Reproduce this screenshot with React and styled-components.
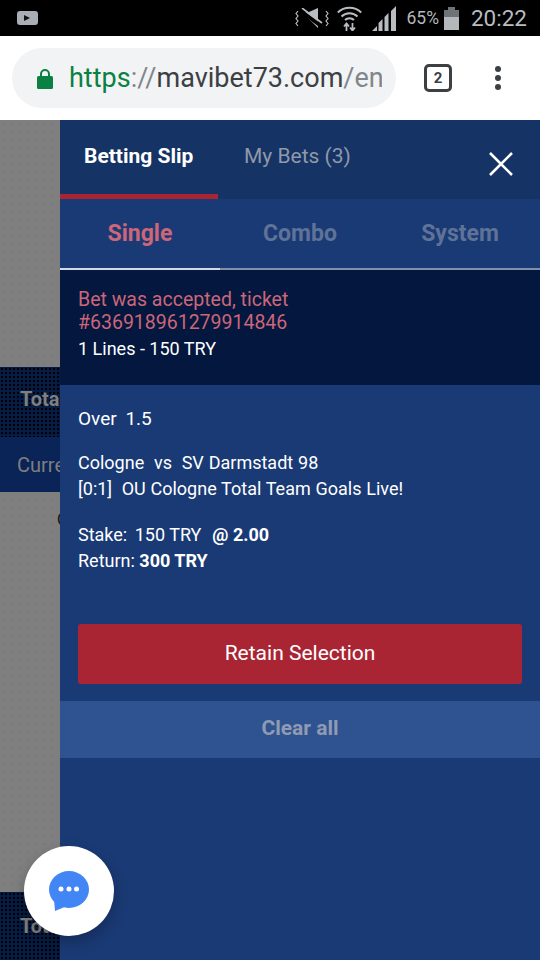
import React from 'react';
import styled, { createGlobalStyle } from 'styled-components';

const Global = createGlobalStyle`
  html, body { margin: 0; padding: 0; background: #000; }
  * { box-sizing: border-box; }
  body { font-family: Roboto, "Liberation Sans", sans-serif; -webkit-font-smoothing: antialiased; }
`;

const Screen = styled.div`
  width: 540px; height: 960px; display: flex; flex-direction: column; overflow: hidden; position: relative;
`;
const StatusBar = styled.div`
  height: 36px; background: #000; display: flex; align-items: center; padding: 0 13px 0 16px; color: #b9bcc0; flex: none;
`;
const StatusRight = styled.div`
  margin-left: auto; display: flex; align-items: center;
`;
const Battery = styled.span`
  font-size: 17.5px; margin: 0 5px 0 10px; color: #b4b7bb;
`;
const Clock = styled.span`
  font-size: 22.5px; margin-left: 12px; color: #b9bcc0;
`;
const BrowserBar = styled.div`
  height: 84px; background: #fff; display: flex; align-items: center; padding: 0 0 0 12px; flex: none;
`;
const UrlPill = styled.div`
  width: 384px; height: 60px; border-radius: 30px; background: #f1f3f4; display: flex; align-items: center; padding-left: 25px; overflow: hidden;
`;
const Url = styled.div`
  font-size: 27px; margin-left: 16px; white-space: nowrap; width: 313px; overflow: hidden; color: #3c4043;
`;
const Scheme = styled.span`color: #0b8043;`;
const Dim = styled.span`color: #80868b;`;
const TabCount = styled.div`
  width: 28px; height: 28px; margin-left: 28px; border: 3px solid #3c4043; border-radius: 5px; font-size: 15px; font-weight: 700; color: #3c4043; display: flex; align-items: center; justify-content: center; flex: none;
`;
const Dots = styled.div`
  margin-left: 43px; display: flex; flex-direction: column; gap: 3px;
`;
const Dot = styled.span`width: 6px; height: 6px; border-radius: 50%; background: #3c4043;`;

const Page = styled.div`
  flex: 1; position: relative; background-color: #7f7f7f; background-image: radial-gradient(#747474 .6px, transparent .8px); background-size: 8px 8px; display: flex; flex-direction: column; overflow: hidden;
`;
const Gray = styled.div`
  height: ${p => p.$h}px; flex: none; position: relative;
`;
const Band = styled.div`
  height: ${p => p.$h}px; flex: none; background-color: ${p => p.$bg}; background-image: radial-gradient(${p => p.$dot} .7px, transparent .9px); background-size: ${p => p.$dots}px ${p => p.$dots}px; color: #7f7f7f; font-size: 20px; font-weight: ${p => p.$w || 400}; padding: 0 0 ${p => p.$pb || 0}px ${p => p.$pl}px; display: flex; align-items: center; white-space: nowrap;
`;
const StrayLetter = styled.div`
  color: #111; font-size: 16px; padding: 21px 0 0 57px; line-height: 14px;
`;

const Drawer = styled.div`
  position: absolute; left: 60px; top: 0; right: 0; bottom: 0; background: #1a3a75; display: flex; flex-direction: column; color: #fff;
`;
const Header = styled.div`
  height: 79px; background: #163365; display: flex; flex: none; align-items: stretch; position: relative;
`;
const MainTab = styled.div`
  width: ${p => p.$w}px; font-size: 21px; line-height: 21px; font-weight: ${p => p.$active ? 700 : 400}; color: ${p => p.$active ? '#fff' : '#8f99a9'}; border-bottom: 5px solid ${p => p.$active ? '#a92533' : 'transparent'}; padding: 26px 0 0 ${p => p.$pl}px; white-space: nowrap;
`;
const Close = styled.div`
  position: absolute; left: 427px; top: 30px; width: 28px; height: 28px;
`;
const SubTabs = styled.div`
  height: 71px; display: flex; flex: none;
`;
const SubTab = styled.div`
  flex: 1; display: flex; align-items: center; justify-content: center; font-size: 23px; font-weight: 700; color: ${p => p.$active ? '#cc6678' : '#5f7297'}; border-bottom: 2px solid ${p => p.$active ? '#d3dae6' : '#8190ab'};
`;
const Notice = styled.div`
  height: 115px; background: #03173f; padding: 18px 18px 0; font-size: 18px; line-height: 23px; flex: none;
`;
const NoticeAccent = styled.div`color: #cc6678; font-size: 19.5px;`;
const NoticeLine = styled.div`margin-top: 3px; line-height: 23px;`;
const Slip = styled.div`
  padding: 22px 18px 0; font-size: 18px; flex: none; height: 239px;
`;
const SlipTitle = styled.div`line-height: 24px; font-size: 19px; word-spacing: 4px;`;
const SlipLine = styled.div`
  line-height: 26px; word-spacing: ${p => p.$ws || 0}px; white-space: pre;
`;
const StakeLabel = styled.span`margin-right: 3px;`;
const Odds = styled.b`margin-left: 2px;`;
const Group = styled.div`margin-top: ${p => p.$mt}px;`;
const Retain = styled.div`
  margin: 0 18px; height: 60px; padding-bottom: 2px; background: #a92533; border-radius: 3px; display: flex; align-items: center; justify-content: center; font-size: 21px; flex: none;
`;
const Clear = styled.div`
  margin-top: 17px; height: 57px; padding-bottom: 3px; background: #2f5291; color: #8f9bb3; font-weight: 700; font-size: 21px; display: flex; align-items: center; justify-content: center; flex: none;
`;
const Fab = styled.div`
  position: absolute; left: 24px; top: 726px; width: 90px; height: 90px; border-radius: 50%; background: #fff; box-shadow: 0 6px 14px rgba(0,0,0,.25); display: flex; align-items: center; justify-content: center;
`;

export default function App() {
  return (
    <Screen>
      <Global />
      <StatusBar>
        <svg width="22" height="15" viewBox="0 0 22 15">
          <rect width="21" height="14" x="1" y="0" rx="3" fill="#a9adb5" />
          <path d="M8 4l6 3-6 3z" fill="#111" />
        </svg>
        <StatusRight>
          <svg width="34" height="20" viewBox="0 0 34 20">
            <path d="M3 3l-2 2.500 2 2.500-2 2.500 2 2.500-2 2.500 2 2.500M31 3l2 2.500-2 2.500 2 2.500-2 2.500 2 2.500-2 2.500" stroke="#b9bcc0" strokeWidth="1.200" fill="none" />
            <path d="M7 4h7l9-4v20z" fill="#b9bcc0" />
            <path d="M6 3l20 15" stroke="#000" strokeWidth="3.500" />
            <path d="M7 0l20 15" stroke="#b9bcc0" strokeWidth="1.600" />
          </svg>
          <svg width="25" height="26" viewBox="0 0 25 26" style={{ marginLeft: 8 }}>
            <path d="M.8 7.500a17 17 0 0 1 23.400 0M4.500 11.500a11.500 11.500 0 0 1 16 0M8 15a6.500 6.500 0 0 1 9 0" stroke="#b9bcc0" strokeWidth="2" fill="none" />
            <path d="M9.500 26v-6M7 21.500l2.500-3 2.500 3M15.500 18v6M13 22.500l2.500 3 2.500-3" stroke="#b9bcc0" strokeWidth="1.800" fill="none" />
          </svg>
          <svg width="24" height="25" viewBox="0 0 24 25" style={{ marginLeft: 10 }}>
            <path d="M0 25L5 20V25ZM6.500 25V17L10.500 13V25ZM12.500 25V11L16.500 7V25ZM19 25V5L24 0V25Z" fill="#b9bcc0" />
          </svg>
          <Battery>65%</Battery>
          <svg width="15" height="23" viewBox="0 0 15 23">
            <rect x="4" y="0" width="7" height="3" fill="#6f7276" />
            <rect x="0" y="3" width="15" height="20" fill="#b4b7bb" />
            <rect x="0" y="3" width="15" height="7" fill="#6f7276" />
          </svg>
          <Clock>20:22</Clock>
        </StatusRight>
      </StatusBar>
      <BrowserBar>
        <UrlPill>
          <svg width="16" height="21" viewBox="0 0 16 21" style={{ flex: 'none' }}>
            <path d="M4 9V6a4 4 0 0 1 8 0v3" stroke="#0b8043" strokeWidth="2" fill="none" />
            <rect x="0" y="8" width="16" height="13" rx="1.500" fill="#0b8043" />
          </svg>
          <Url><Scheme>https</Scheme><Dim>://</Dim>mavibet73.com<Dim>/en/</Dim></Url>
        </UrlPill>
        <TabCount>2</TabCount>
        <Dots><Dot /><Dot /><Dot /></Dots>
      </BrowserBar>
      <Page>
        <Gray $h={247} />
        <Band $h={70} $bg="#071c45" $dot="#000" $dots={4} $w={700} $pl={20} $pb={6}>Total</Band>
        <Band $h={55} $bg="#0f2a60" $dot="#0a2458" $dots={2} $pl={17}>Current</Band>
        <Gray $h={400}><StrayLetter>C</StrayLetter></Gray>
        <Band $h={68} $bg="#071c45" $dot="#000" $dots={4} $w={700} $pl={20}>Total</Band>
        <Drawer>
          <Header>
            <MainTab $active $w={158} $pl={24}>Betting Slip</MainTab>
            <MainTab $w={160} $pl={26}>My Bets (3)</MainTab>
            <Close>
              <svg width="28" height="28" viewBox="0 0 28 28">
                <path d="M3 3l22 22M25 3L3 25" stroke="#fff" strokeWidth="2.600" fill="none" />
              </svg>
            </Close>
          </Header>
          <SubTabs>
            <SubTab $active>Single</SubTab>
            <SubTab>Combo</SubTab>
            <SubTab>System</SubTab>
          </SubTabs>
          <Notice>
            <NoticeAccent>Bet was accepted, ticket<br />#636918961279914846</NoticeAccent>
            <NoticeLine>1 Lines - 150 TRY</NoticeLine>
          </Notice>
          <Slip>
            <SlipTitle>Over 1.5</SlipTitle>
            <Group $mt={19}>
              <SlipLine $ws={0.4}>{'Cologne  vs  SV Darmstadt 98'}</SlipLine>
              <SlipLine $ws={0.3}>{'[0:1]  OU Cologne Total Team Goals Live!'}</SlipLine>
            </Group>
            <Group $mt={20}>
              <SlipLine><StakeLabel>Stake:</StakeLabel>{' 150 TRY  '}<Odds>@ 2.00</Odds></SlipLine>
              <SlipLine>{'Return: '}<b>300 TRY</b></SlipLine>
            </Group>
          </Slip>
          <Retain>Retain Selection</Retain>
          <Clear>Clear all</Clear>
        </Drawer>
        <Fab>
          <svg width="40" height="40" viewBox="0 0 40 40">
            <ellipse cx="20" cy="18.500" rx="20" ry="18.500" fill="#4285f4" />
            <path d="M5 28L6 40L18 35Z" fill="#4285f4" />
            <circle cx="12" cy="18" r="2.500" fill="#fff" />
            <circle cx="20" cy="18" r="2.500" fill="#fff" />
            <circle cx="27.500" cy="18" r="2.500" fill="#fff" />
          </svg>
        </Fab>
      </Page>
    </Screen>
  );
}
